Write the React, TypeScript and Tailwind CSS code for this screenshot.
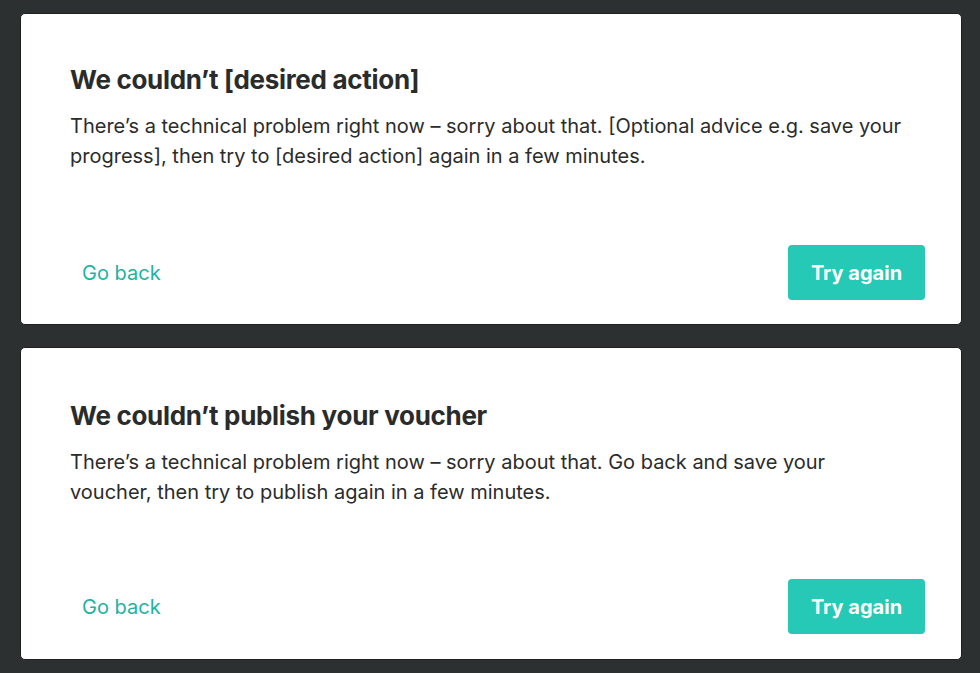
import React from "react";

function Card({ title, body, second }: { title: string; body: React.ReactNode; second?: boolean }) {
  return (
    <div
      className={
        second
          ? "flex h-[313px] flex-col rounded-[5px] border border-[#1e2020] bg-white pl-[49px] pr-[36px] pt-[51px] pb-[25px]"
          : "flex h-[312px] flex-col rounded-[5px] border border-[#1e2020] bg-white pl-[49px] pr-[36px] pt-[49px] pb-[24px]"
      }
    >
      <h2 className="text-[26px] font-bold leading-[33px] tracking-[-0.3px] text-[#2a2c2c]">{title}</h2>
      <p className="mt-[15px] text-[20px] leading-[30px] text-[#2a2c2c]">{body}</p>
      <div className="mt-auto flex items-center justify-between">
        <button className="ml-[12px] text-[20px] leading-[30px] text-[#1db3a3]">Go back</button>
        <button className="flex h-[55px] w-[137px] items-center justify-center rounded-[4px] bg-[#25c9b5] text-[20px] font-bold text-white">
          Try again
        </button>
      </div>
    </div>
  );
}

export default function App() {
  return (
    <div
      className="flex min-h-[673px] flex-col gap-[22px] bg-[#2d3030] pt-[13px] pl-[20px] pr-[18px]"
      style={{ fontFamily: "Inter, 'Noto Sans', sans-serif" }}
    >
      <Card
        title="We couldn’t [desired action]"
        body={
          <>
            There’s a technical problem right now – sorry about that. [Optional advice e.g. save your
            <br />
            progress], then try to [desired action] again in a few minutes.
          </>
        }
      />
      <Card
        second
        title="We couldn’t publish your voucher"
        body={
          <>
            There’s a technical problem right now – sorry about that. Go back and save your
            <br />
            voucher, then try to publish again in a few minutes.
          </>
        }
      />
    </div>
  );
}
